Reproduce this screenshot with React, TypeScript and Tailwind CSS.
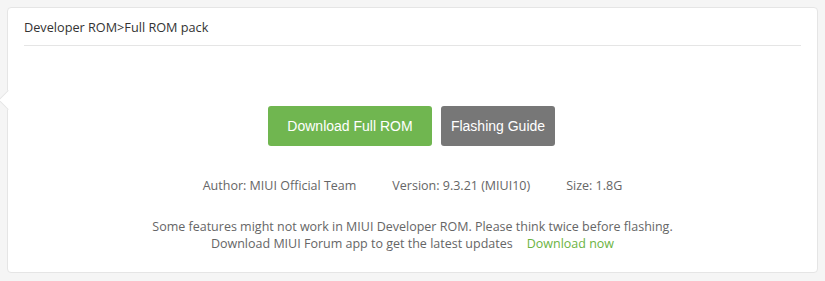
export default function App() {
  return (
    <div className="w-[825px] h-[281px] bg-[#f5f5f5] p-[7px] pb-[8px] box-border">
      <div className="relative h-full bg-white border border-[#e5e5e5] rounded-[4px] px-4 font-['Open_Sans','Noto_Sans',sans-serif]">
        {/* little arrow on the left edge */}
        <div className="absolute left-[-7px] top-[85px] w-[14px] h-[14px] bg-white border-l border-b border-[#e5e5e5] rotate-45"></div>

        <div className="h-[38px] border-b border-[#e5e5e5] flex items-end pb-[8px] text-[12.7px] text-[#333]">
          Developer ROM&gt;Full ROM pack
        </div>

        <div className="flex justify-center gap-[9px] mt-[60px] pr-[2px]">
          <button className="w-[164px] h-[40px] rounded-[3px] bg-[#70b650] text-white text-[14px] font-['Liberation_Sans',sans-serif]">
            Download Full ROM
          </button>
          <button className="w-[114px] h-[40px] rounded-[3px] bg-[#777777] text-white text-[14px] font-['Liberation_Sans',sans-serif]">
            Flashing Guide
          </button>
        </div>

        <div className="flex justify-center gap-[36px] mt-[31px] text-[12.5px] text-[#666]">
          <span>Author: MIUI Official Team</span>
          <span>Version: 9.3.21 (MIUI10)</span>
          <span>Size: 1.8G</span>
        </div>

        <div className="mt-[22px] text-center text-[12.5px] leading-[17px] text-[#666]">
          <p>Some features might not work in MIUI Developer ROM. Please think twice before flashing.</p>
          <p>
            Download MIUI Forum app to get the latest updates
            <a className="ml-[14px] text-[#6cb33f]">Download now</a>
          </p>
        </div>
      </div>
    </div>
  );
}
